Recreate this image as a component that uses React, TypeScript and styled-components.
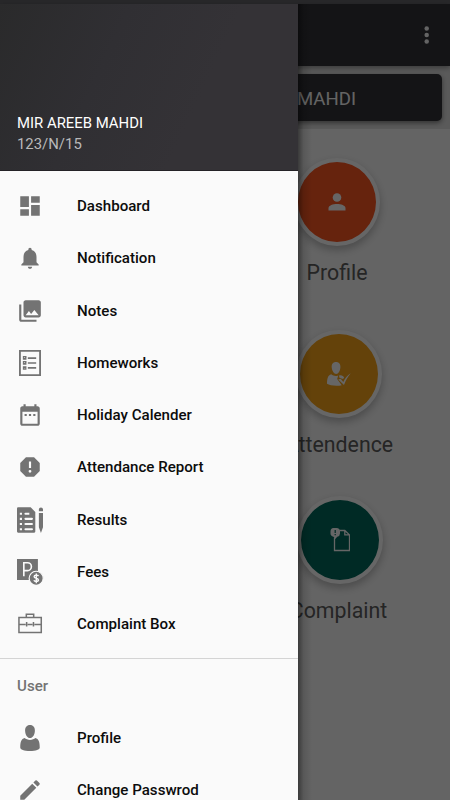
import React from "react";
import styled, { createGlobalStyle } from "styled-components";

const GlobalStyle = createGlobalStyle`
  * { box-sizing: border-box; }
  body { margin: 0; background: #fafafa; font-family: Roboto, "Liberation Sans", sans-serif; }
`;

const Screen = styled.div`
  position: relative;
  width: 450px;
  height: 800px;
  overflow: hidden;
  display: flex;
  flex-direction: column;
  background: #fafafa;
`;

const StatusBar = styled.div`
  height: 4px;
  flex: none;
  background: #28282a;
`;

const Body = styled.div`
  position: relative;
  flex: 1;
  min-height: 0;
`;

const AppBar = styled.header`
  position: relative;
  height: 62px;
  display: flex;
  align-items: center;
  justify-content: flex-end;
  padding: 0 16px 0 0;
  background: #333338;
  box-shadow: 0 2px 5px rgba(0, 0, 0, 0.35);
`;

const Banner = styled.section`
  height: 63px;
  padding: 8px;
  background: #e1e1e1;
`;

const NameCard = styled.div`
  height: 47px;
  border-radius: 5px;
  background: #333338;
  color: #fafafa;
  font-size: 18.6px;
  display: flex;
  align-items: center;
  justify-content: flex-end;
  padding: 3px 86px 0 0;
  white-space: nowrap;
  box-shadow: 0 2px 5px rgba(0, 0, 0, 0.45);
`;

const Tiles = styled.main`
  display: flex;
  flex-direction: column;
  align-items: flex-end;
  padding-top: 28.5px;
`;

const Tile = styled.div<{ $height: number; $shift: number }>`
  width: 226px;
  height: ${(p) => p.$height}px;
  display: flex;
  flex-direction: column;
  align-items: center;
  padding-left: ${(p) => p.$shift}px;
`;

const Disc = styled.div<{ $color: string }>`
  width: 86px;
  height: 88px;
  flex: none;
  border: 4px solid #fff;
  border-radius: 50%;
  background: ${(p) => p.$color};
  display: flex;
  align-items: center;
  justify-content: center;
  box-shadow: 0 4px 9px rgba(0, 0, 0, 0.26);
`;

const TileLabel = styled.div<{ $nudge?: number }>`
  margin-top: 13px;
  margin-left: ${(p) => p.$nudge ?? 0}px;
  font-size: 21.3px;
  line-height: 28px;
  color: #5c5c5c;
`;

const Scrim = styled.div`
  position: absolute;
  inset: 0;
  background: rgba(0, 0, 0, 0.6);
`;

const Drawer = styled.nav`
  position: absolute;
  top: 0;
  bottom: 0;
  left: 0;
  width: 298px;
  overflow: hidden;
  background: #fafafa;
`;

const DrawerShadow = styled.div`
  position: absolute;
  top: 0;
  bottom: 0;
  left: 298px;
  width: 14px;
  background: linear-gradient(to right, rgba(0, 0, 0, 0.42), rgba(0, 0, 0, 0.12) 40%, transparent);
`;

const DrawerHeader = styled.div`
  height: 166.5px;
  display: flex;
  flex-direction: column;
  justify-content: flex-end;
  padding: 0 17px 14.5px;
  background: linear-gradient(115deg, #2a2a2b, #302f33 35%, #343236 65%);
  border-bottom: 1px solid #242226;
  font-size: 14.9px;
  line-height: 21px;
`;

const UserName = styled.div`
  color: #fff;
`;

const UserCode = styled.div`
  color: #b9b9ba;
`;

const Menu = styled.ul<{ $top: number }>`
  list-style: none;
  margin: 0;
  padding: ${(p) => p.$top}px 0 0;
`;

const MenuItem = styled.li`
  height: 52.25px;
  display: flex;
  align-items: center;
  padding-left: 17px;
  gap: 34px;
  color: #0c0c0c;
  font-size: 15.1px;
  font-weight: 500;
`;

const Glyph = styled.svg`
  width: 26px;
  height: 26px;
  flex: none;
  color: #737373;
  overflow: visible;
`;

const Section = styled.div`
  margin-top: 7.5px;
  height: 54px;
  border-top: 1px solid #d4d4d4;
  display: flex;
  align-items: center;
  padding: 2px 17px 0;
  color: #737373;
  font-size: 15.1px;
  font-weight: 500;
`;

const icons: Record<string, React.ReactNode> = {
  dashboard: <path fill="currentColor" d="M3 13h8V3H3v10zm0 8h8v-6H3v6zm10 0h8V11h-8v10zm0-18v6h8V3h-8z" />,
  bell: (
    <path
      fill="currentColor"
      d="M12 22c1.1 0 2-.9 2-2h-4c0 1.1.9 2 2 2zm6-6v-5c0-3.07-1.64-5.64-4.5-6.32V4c0-.83-.67-1.5-1.5-1.5s-1.5.67-1.5 1.5v.68C7.63 5.36 6 7.92 6 11v5l-2 2v1h16v-1l-2-2z"
    />
  ),
  photos: (
    <path
      fill="currentColor"
      d="M22 16V4c0-1.1-.9-2-2-2H8c-1.1 0-2 .9-2 2v12c0 1.1.9 2 2 2h12c1.1 0 2-.9 2-2zm-11-4l2.03 2.71L16 11l4 5H8l3-4zM2 6v14c0 1.1.9 2 2 2h14v-2H4V6H2z"
    />
  ),
  checklist: (
    <g fill="none" stroke="currentColor">
      <path strokeWidth="1.7" d="M2.7.8h18.6v22.4H2.7z" />
      <path strokeWidth="1.6" d="M10 7.4h7.7M10 12h7.7M10 16.6h7.7" />
      <path strokeWidth="1" d="M5.9 6.1h2.3v2.3H5.900zM5.900 10.700h2.300V13H5.900zM5.900 15.400h2.300v2.300H5.900zM6 7.200l1 1 1.700-2M6 11.800l1 1 1.700-2M5.900 16.500h2.300" />
    </g>
  ),
  calendar: (
    <path
      fill="currentColor"
      d="M9 11H7v2h2v-2zm4 0h-2v2h2v-2zm4 0h-2v2h2v-2zm2-7h-1V2h-2v2H8V2H6v2H5c-1.11 0-1.99.9-1.99 2L3 20c0 1.1.89 2 2 2h14c1.1 0 2-.9 2-2V6c0-1.1-.9-2-2-2zm0 16H5V9h14v11z"
    />
  ),
  report: (
    <path
      fill="currentColor"
      fillRule="evenodd"
      d="M15.73 3H8.27L3 8.27v7.46L8.27 21h7.46L21 15.73V8.27L15.73 3zM12 17.3a1.3 1.3 0 1 1 0-2.6 1.3 1.3 0 0 1 0 2.6zM13 13h-2V7h2v6z"
    />
  ),
  results: (
    <g fill="currentColor">
      <path
        fillRule="evenodd"
        d="M1 .3h11.6l4.3 4.2v18.2q0 1-1 1H1q-1 0-1-1V1.3q0-1 1-1zM2.6 5.2v1.9h2V5.2zm0 4.8v1.9h2V10zm0 4.7v1.9h2v-1.9zm0 4.8v1.9h2v-1.9zM7.8 5.2a.95.95 0 0 0 0 1.9h3.6V5.2zm0 4.8a.95.95 0 0 0 0 1.9h6a.95.95 0 0 0 0-1.9zm0 4.7a.95.95 0 0 0 0 1.9h6a.95.95 0 0 0 0-1.9zm0 4.8a.95.95 0 0 0 0 1.9h6a.95.95 0 0 0 0-1.9z"
      />
      <path d="M20.2 4V2.3a1.9 1.9 0 0 1 3.8 0V4zM20.2 5.6H24v13.2l-1.9 5.2-1.9-5.2z" />
    </g>
  ),
  fees: (
    <g>
      <path fill="currentColor" d="M0 0h19.3v19.4H0z" />
      <path fill="none" stroke="#fafafa" strokeWidth="1.5" d="M6.3 16V3.5h3.4a3.5 3.5 0 0 1 0 7.2H6.3" />
      <circle cx="17.7" cy="17.8" r="6.5" fill="currentColor" stroke="#fafafa" strokeWidth="1.1" />
      <path
        fill="none"
        stroke="#fafafa"
        strokeWidth="1.3"
        d="M19.8 15.8c-.5-1.2-4-1.4-4 .5 0 1.8 4 1.2 4 3.1 0 1.8-3.7 1.7-4.2.2M17.8 13.3v9"
      />
    </g>
  ),
  briefcase: (
    <g fill="none" stroke="currentColor" strokeWidth="1.4">
      <path d="M1.8 6h20.6v13.8H1.800zM8.600 6V2.900h6.800V6M1.800 12.400H8M9.800 12.400h4.500M16.100 12.400h6.300M8.900 10.200v4.200M15.200 10.200v4.200" />
    </g>
  ),
  person: (
    <g fill="currentColor">
      <path d="M12 0c3 0 4.7 2.2 4.5 5.5C16.3 9 14.5 12 12 12S7.7 9 7.5 5.5C7.3 2.2 9 0 12 0z" />
      <path d="M7 12.1c1.2 1 3 1.7 5 1.7s3.8-.7 5-1.7c3 .8 4 3.6 4 8.7 0 2-3.5 3.2-9 3.2s-9-1.2-9-3.2c0-5.1 1-7.9 4-8.7z" />
    </g>
  ),
  pencil: (
    <path
      fill="currentColor"
      d="M3 17.25V21h3.75L17.81 9.94l-3.75-3.75L3 17.25zM20.71 7.04a1 1 0 0 0 0-1.41l-2.34-2.34a1 1 0 0 0-1.41 0l-1.83 1.83 3.75 3.75 1.83-1.83z"
    />
  ),
};

const mainItems: [string, string][] = [
  ["dashboard", "Dashboard"],
  ["bell", "Notification"],
  ["photos", "Notes"],
  ["checklist", "Homeworks"],
  ["calendar", "Holiday Calender"],
  ["report", "Attendance Report"],
  ["results", "Results"],
  ["fees", "Fees"],
  ["briefcase", "Complaint Box"],
];

const userItems: [string, string][] = [
  ["person", "Profile"],
  ["pencil", "Change Passwrod"],
];

function MenuList({ items, top }: { items: [string, string][]; top: number }) {
  return (
    <Menu $top={top}>
      {items.map(([icon, label]) => (
        <MenuItem key={label}>
          <Glyph viewBox="0 0 24 24">{icons[icon]}</Glyph>
          {label}
        </MenuItem>
      ))}
    </Menu>
  );
}

export default function App() {
  return (
    <>
      <GlobalStyle />
      <Screen>
        <StatusBar />
        <Body>
          <AppBar>
            <svg width="14" height="22" viewBox="0 0 14 22" fill="#fafafa">
              <circle cx="6.700" cy="4.500" r="2.250" />
              <circle cx="6.700" cy="11" r="2.250" />
              <circle cx="6.700" cy="17.500" r="2.250" />
            </svg>
          </AppBar>
          <Banner>
            <NameCard>MAHDI</NameCard>
          </Banner>
          <Tiles>
            <Tile $height={172.5} $shift={0}>
              <Disc $color="#ff5722">
                <svg width="18" height="18" viewBox="0 0 18 18" fill="#fff">
                  <circle cx="9" cy="4.5" r="4.3" />
                  <path d="M.5 17.5v-2.4C.5 12.5 5 11 9 11s8.5 1.5 8.500 4.100v2.400z" />
                </svg>
              </Disc>
              <TileLabel>Profile</TileLabel>
            </Tile>
            <Tile $height={166} $shift={3}>
              <Disc $color="#f9a51b">
                <svg width="25" height="24" viewBox="0 0 25 24" fill="#fff">
                  <path d="M10 0c3 0 4.7 2.2 4.4 5.5-.3 3.5-1.9 6.5-4.2 6.5S6.1 9 5.7 5.5C5.4 2.2 7 0 10 0z" />
                  <path d="M5.2 12.2c2 1.5 4.5 2.3 7 1.2l-1 3.6 4.5 6.200c-4.500 1-12 .5-14.700-1.400.1-5.300.8-8.500 4.200-9.600z" />
                  <path d="M13.2 13.3c2.5-.5 4.4.6 5 2.6l-1.6 1.100-3.400-1.600zM12.200 17.600l2.500-.8 2.600 3.200c1.800-3.800 4-6.500 7.400-8.700-3 3.500-5 7-6.700 11.700z" />
                </svg>
              </Disc>
              <TileLabel $nudge={1}>Attendence</TileLabel>
            </Tile>
            <Tile $height={166} $shift={5}>
              <Disc $color="#00695c">
                <svg width="20" height="24" viewBox="0 0 20 24">
                  <path d="M4.5 10v12.5h15V6.8L14.8 2.5H9.5M14.8 2.5v4.3h4.7" fill="none" stroke="#fff" strokeWidth="1.3" />
                  <path d="M3.5 0h3Q10 0 10 3.5v2Q10 8 7.3 8.8L5.2 11 3.5 8.8Q.5 8 .5 5.5v-2Q.5 0 3.5 0z" fill="#fff" />
                  <path d="M5.2 2v3M5.2 6v1.3" stroke="#00695c" strokeWidth="1.2" />
                </svg>
              </Disc>
              <TileLabel $nudge={-2}>Complaint</TileLabel>
            </Tile>
          </Tiles>
          <Scrim />
          <DrawerShadow />
          <Drawer>
            <DrawerHeader>
              <UserName>MIR AREEB MAHDI</UserName>
              <UserCode>123/N/15</UserCode>
            </DrawerHeader>
            <MenuList items={mainItems} top={9.5} />
            <Section>User</Section>
            <MenuList items={userItems} top={0} />
          </Drawer>
        </Body>
      </Screen>
    </>
  );
}
